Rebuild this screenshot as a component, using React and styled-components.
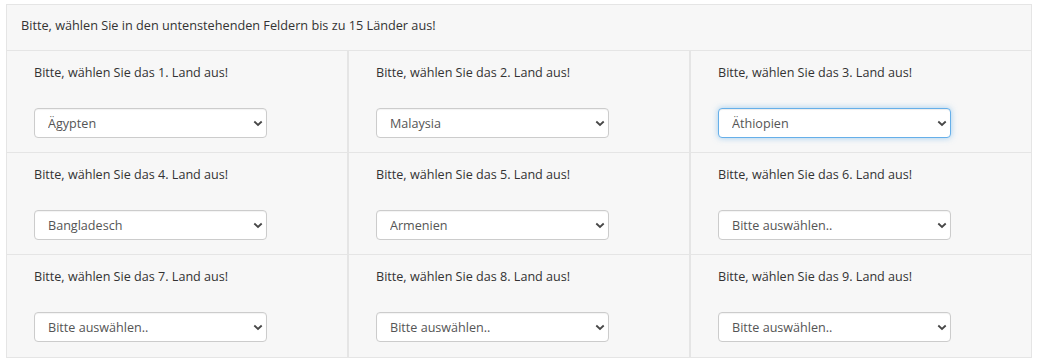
import React from 'react';
import styled, { createGlobalStyle } from 'styled-components';

const countries = [
    'Ägypten', 'Malaysia', 'Äthiopien',
    'Bangladesch', 'Armenien', '',
    '', '', '',
];

export default function App() {
    return (
        <>
            <GlobalStyle />
            <Page>
                <Panel>
                    <Header>Bitte, wählen Sie in den untenstehenden Feldern bis zu 15 Länder aus!</Header>
                    <Grid>
                        {countries.map((c, i) => (
                            <Cell key={i} $col={i % 3} $last={i >= 6}>
                                <Label>Bitte, wählen Sie das {i + 1}. Land aus!</Label>
                                <SelectWrap>
                                    <Select defaultValue={c} $focused={i === 2}>
                                        <option value="">Bitte auswählen..</option>
                                        {c && <option value={c}>{c}</option>}
                                    </Select>
                                    <Chevron width="10" height="7" viewBox="0 0 10 7">
                                        <path d="M1.3 1.5 L5 5 L8.7 1.5" fill="none" stroke="#474747" strokeWidth="1.8" />
                                    </Chevron>
                                </SelectWrap>
                            </Cell>
                        ))}
                    </Grid>
                </Panel>
            </Page>
        </>
    )
}

const GlobalStyle = createGlobalStyle`
  body {
    margin: 0;
    background: #FFFFFF;
    font-family: 'Open Sans', 'Noto Sans', sans-serif;
    color: #333333;
  }
`

const Page = styled.div`
  padding: 4px 5px 0 6px;
`

const Panel = styled.div`
  width: 1024px;
  border: 1px solid #E5E5E5;
  border-bottom: none;
  background: #F7F7F7;
`

const Header = styled.div`
  height: 46px;
  box-sizing: border-box;
  padding: 12px 14px 0 14px;
  font-size: 12.7px;
  line-height: 17px;
  border-bottom: 1px solid #E5E5E5;
`

const Grid = styled.div`
  display: grid;
  grid-template-columns: 340px 342px 342px;
`

const Cell = styled.div`
  box-sizing: border-box;
  height: ${p => p.$last ? 103 : 102}px;
  padding: 13px 0 0 27px;
  border-bottom: 1px solid #E5E5E5;
  border-left: ${p => p.$col === 0 ? 'none' : '2px solid #E5E5E5'};
`

const Label = styled.div`
  font-size: 12.6px;
  line-height: 17px;
  color: #333333;
`

const SelectWrap = styled.div`
  position: relative;
  width: 233px;
  margin-top: 27px;
`

const Select = styled.select`
  appearance: none;
  -webkit-appearance: none;
  width: 233px;
  height: 30px;
  box-sizing: border-box;
  padding: 0 12px 0 13px;
  font-family: 'Open Sans', 'Noto Sans', sans-serif;
  font-size: 12.6px;
  color: #555555;
  background: #FFFFFF;
  border: 1px solid ${p => p.$focused ? '#66AFE9' : '#CCCCCC'};
  border-radius: 4px;
  box-shadow: ${p => p.$focused
    ? 'inset 0 1px 1px rgba(0,0,0,.075), 0 0 6px rgba(102,175,233,.6)'
    : 'inset 0 1px 1px rgba(0,0,0,.05)'};
  outline: none;
`

const Chevron = styled.svg`
  position: absolute;
  right: 4px;
  top: 12px;
  pointer-events: none;
`
